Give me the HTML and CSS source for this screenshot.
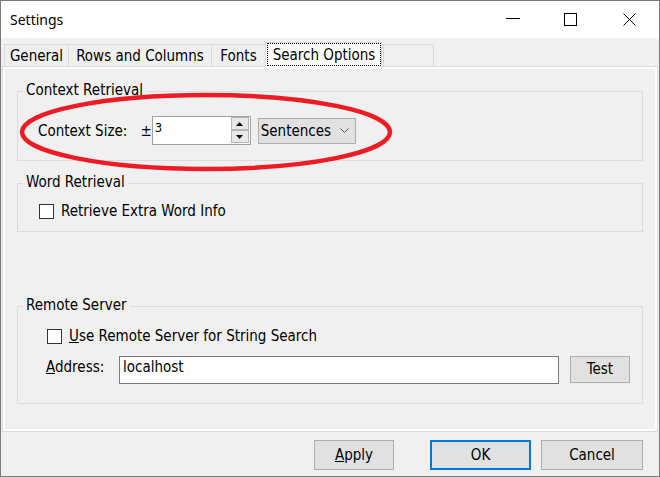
FILE: index.html
```html
<!DOCTYPE html>
<html>
<head>
<meta charset="utf-8">
<link rel="stylesheet" href="styles.css">
</head>
<body>
<div class="window">
  <div class="titlebar">
    <span class="title">Settings</span>
    <div class="controls">
      <span class="ctl pad22"><svg width="14" height="13" viewBox="0 0 14 13"><line x1="0" y1="5.5" x2="14" y2="5.5" stroke="#000" stroke-width="1"/></svg></span>
      <span class="ctl pad22"><svg width="13" height="13" viewBox="0 0 13 13"><rect x="0.5" y="0.5" width="12" height="12" fill="none" stroke="#000" stroke-width="1"/></svg></span>
      <span class="ctl pad23"><svg width="13" height="13" viewBox="0 0 13 13"><path d="M0.5 0.5 L12.5 12.5 M12.5 0.5 L0.5 12.5" fill="none" stroke="#000" stroke-width="1"/></svg></span>
    </div>
  </div>
  <div class="body">
    <div class="tabs">
      <div class="tab t1">General</div>
      <div class="tab t2">Rows and Columns</div>
      <div class="tab t3">Fonts</div>
      <div class="tab sel"><span class="focus">Search Options</span></div>
      <div class="tab t5"></div>
    </div>
    <div class="panel">
      <div class="group g1">
        <div class="gtitle">Context Retrieval</div>
        <div class="ctxrow">
          <span class="lbl-ctx">Context Size:</span>
          <span class="pm">±</span>
          <div class="spin">
            <div class="spin-val">3</div>
            <div class="spin-btns">
              <div class="sbtn"><svg width="7" height="4" viewBox="0 0 7 4"><polygon points="0,4 3.5,0 7,4" fill="#000"/></svg></div>
              <div class="sbtn"><svg width="7" height="4" viewBox="0 0 7 4"><polygon points="0,0 7,0 3.5,4" fill="#000"/></svg></div>
            </div>
          </div>
          <div class="combo">
            <span>Sentences</span>
            <svg class="chev" width="9" height="5" viewBox="0 0 9 5"><polyline points="0.5,0.5 4.5,4.5 8.5,0.5" fill="none" stroke="#555" stroke-width="1"/></svg>
          </div>
        </div>
      </div>
      <div class="group g2">
        <div class="gtitle">Word Retrieval</div>
        <div class="cbrow wordrow"><span class="cb"></span><span>Retrieve Extra Word Info</span></div>
      </div>
      <div class="group g3">
        <div class="gtitle">Remote Server</div>
        <div class="cbrow remoterow"><span class="cb"></span><span><u>U</u>se Remote Server for String Search</span></div>
        <div class="addrrow">
          <span class="addr-lbl"><u>A</u>ddress:</span>
          <div class="field">localhost</div>
          <div class="btn test">Test</div>
        </div>
      </div>
    </div>
    <div class="buttons">
      <div class="btn apply"><u>A</u>pply</div>
      <div class="btn ok">OK</div>
      <div class="btn cancel">Cancel</div>
    </div>
  </div>
  <svg class="annot" width="660" height="477" viewBox="0 0 660 477">
    <ellipse cx="206" cy="132" rx="184" ry="37" fill="none" stroke="#ed1c24" stroke-width="4.5"/>
  </svg>
</div>
</body>
</html>
```

FILE: styles.css
```css
* { box-sizing: border-box; }
html, body { margin: 0; padding: 0; }
body {
  width: 660px;
  height: 477px;
  overflow: hidden;
  font-family: "DejaVu Sans Condensed", "DejaVu Sans", sans-serif;
  font-stretch: condensed;
  font-size: 15px;
  line-height: 18px;
  color: #000;
  background: #f0f0f0;
}
.window {
  position: relative;
  width: 660px;
  height: 477px;
  border: 1px solid #7a7a7a;
  background: #f0f0f0;
  display: flex;
  flex-direction: column;
}
.titlebar {
  flex: none;
  height: 37px;
  background: #fff;
  display: flex;
  align-items: center;
}
.title {
  flex: 1;
  font-family: "Noto Sans", sans-serif;
  font-stretch: normal;
  font-size: 14px;
  padding-left: 9px;
}
.controls {
  display: flex;
  align-self: stretch;
  margin-right: 1px;
}
.ctl {
  width: 58px;
  display: flex;
  align-items: flex-start;
  padding-top: 12px;
}
.ctl svg { display: block; }
.pad22 { padding-left: 22px; }
.pad23 { padding-left: 23px; }

.body {
  flex: 1;
  display: flex;
  flex-direction: column;
}
.tabs {
  display: flex;
  align-items: flex-end;
  height: 26px;
  margin: 4px 0 -2px 3px;
  position: relative;
  z-index: 1;
}
.tab {
  height: 22px;
  margin-bottom: 2px;
  margin-right: -1px;
  border: 1px solid #d9d9d9;
  border-bottom: none;
  background: #f0f0f0;
  text-align: center;
  padding-top: 2px;
  white-space: nowrap;
}
.t1 { width: 65px; }
.t2 { width: 144px; }
.t3 { width: 55px; }
.t5 { width: 51px; margin-left: 2px; }
.tab.sel {
  width: 117px;
  height: 26px;
  margin-bottom: 0;
  background: #fff;
  padding: 0 0 0 1px;
}
.focus {
  display: block;
  width: 114px;
  height: 23px;
  margin-top: 0;
  border: 1px dotted #000;
  padding-top: 2px;
  text-align: center;
}

.panel {
  height: 366px;
  margin: 0 1px;
  border: 1px solid #d9d9d9;
  box-shadow: inset 0 0 0 2px #fff;
  padding: 24px 14px 0 14px;
}
.group {
  border: 1px solid #dcdcdc;
}
.gtitle {
  width: max-content;
  margin: -11px 0 0 5px;
  padding: 0 3px;
  background: #f0f0f0;
}
.g1 { height: 70px; }
.g2 { height: 49px; margin-top: 22px; }
.g3 { height: 98px; margin-top: 74px; }

.ctxrow {
  display: flex;
  align-items: center;
  height: 29px;
  margin-top: 17px;
  padding-left: 20px;
}
.pm { margin-left: 13px; }
.spin {
  width: 99px;
  height: 29px;
  border: 1px solid #a0a0a0;
  background: #fff;
  display: flex;
}
.spin-val {
  flex: 1;
  font-size: 13px;
  line-height: 15px;
  padding: 3px 0 0 2px;
}
.spin-btns {
  width: 18px;
  margin-right: 1px;
  display: flex;
  flex-direction: column;
}
.sbtn {
  height: 13px;
  border: 1px solid #b4b4b4;
  background: #e8e8e8;
  display: flex;
  align-items: center;
  justify-content: center;
}
.sbtn svg { display: block; }
.combo {
  width: 98px;
  height: 26px;
  margin-left: 7px;
  border: 1px solid #adadad;
  background: #e1e1e1;
  display: flex;
  align-items: center;
  padding-left: 2px;
}
.chev { display: block; margin-left: auto; margin-right: 6px; }

.cbrow {
  display: flex;
  align-items: center;
  height: 18px;
  gap: 7px;
}
.cb {
  flex: none;
  width: 15px;
  height: 15px;
  border: 1px solid #333;
  background: #fff;
}
.wordrow { margin-top: 11px; padding-left: 21px; }
.remoterow { margin-top: 13px; padding-left: 29px; }
.addrrow {
  display: flex;
  align-items: flex-start;
  margin-top: 11px;
  padding-left: 28px;
}
.addr-lbl { width: 73px; margin-top: 2px; }
.field {
  width: 440px;
  height: 28px;
  border: 1px solid #7a7a7a;
  background: #fff;
  padding: 1px 0 0 3px;
}
.btn {
  border: 1px solid #adadad;
  background: #e1e1e1;
  text-align: center;
}
.test {
  width: 60px;
  height: 27px;
  margin-left: 11px;
  line-height: 25px;
}
.buttons {
  display: flex;
  justify-content: flex-end;
  margin-top: 8px;
  padding-right: 16px;
}
.buttons .btn { height: 30px; line-height: 28px; }
.apply { width: 80px; }
.buttons .ok {
  width: 101px;
  margin-left: 36px;
  border: 2px solid #0078d7;
  line-height: 26px;
}
.cancel { width: 102px; margin-left: 10px; }

.annot {
  position: absolute;
  left: -1px;
  top: -1px;
  pointer-events: none;
}
```
